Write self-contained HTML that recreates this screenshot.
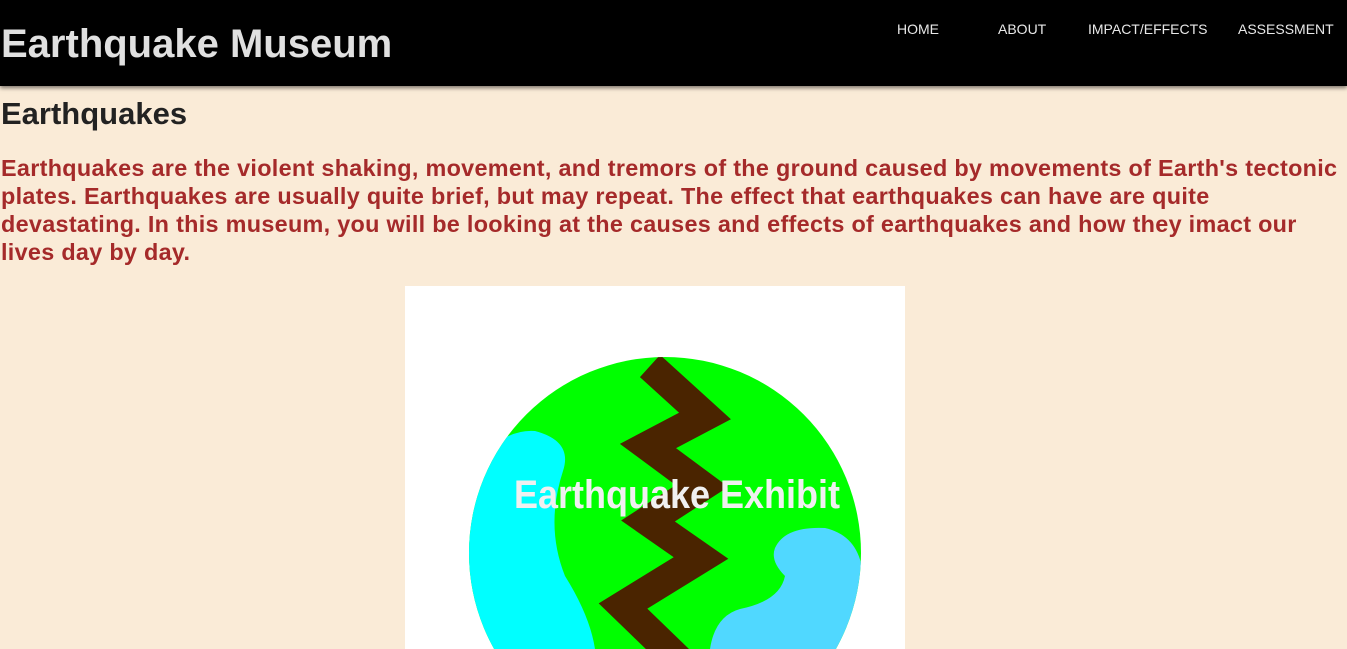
<!DOCTYPE html>
<html><head><style>
body{margin:0;background:#faebd7;font-family:"Liberation Sans",Arial,sans-serif;overflow:hidden;width:1347px;height:649px}
header{background:#000;height:86px;position:relative;box-shadow:0 2px 4px rgba(0,0,0,.5)}
h1{margin:0;position:absolute;left:1px;top:22px;font-size:40px;color:#e0e0e0;font-weight:bold}
nav a{position:absolute;top:21px;color:#e8e8e8;font-size:14px;text-decoration:none}
h2{margin:0;position:absolute;left:1px;top:96px;font-size:31px;color:#222}
p{margin:0;position:absolute;left:1px;top:154px;width:1345px;font-size:23.4px;line-height:28px;color:#a52a2a;font-weight:bold;letter-spacing:0.3px}
svg{position:absolute;left:405px;top:286px}
</style></head><body>
<header><h1>Earthquake Museum</h1>
<nav><a style="left:897px">HOME</a><a style="left:998px">ABOUT</a><a style="left:1088px">IMPACT/EFFECTS</a><a style="left:1238px">ASSESSMENT</a></nav></header>
<h2>Earthquakes</h2>
<p>Earthquakes are the violent shaking, movement, and tremors of the ground caused by movements of Earth's tectonic plates. Earthquakes are usually quite brief, but may repeat. The effect that earthquakes can have are quite devastating. In this museum, you will be looking at the causes and effects of earthquakes and how they imact our lives day by day.</p>
<svg width="500" height="363" viewBox="0 0 500 363">
<rect width="500" height="363" fill="#fff"/>
<defs><clipPath id="c"><circle cx="260" cy="267" r="196"/></clipPath></defs>
<circle cx="260" cy="267" r="196" fill="#00ff00"/>
<g clip-path="url(#c)">
<path d="M55 200 Q90 142 130 145 Q168 155 158 185 Q140 240 160 290 Q185 330 190 363 L40 363Z" fill="#00ffff"/>
<path d="M370 262 Q380 240 420 242 Q455 250 458 290 L458 363 L305 363 Q310 330 335 323 Q375 315 380 290 Q365 275 370 262Z" fill="#50d8ff"/>
<polyline points="245,80 300,130 243,160 297,200 243,235 296,272 218,320 280,380" fill="none" stroke="#4a2400" stroke-width="30" stroke-linejoin="miter" stroke-miterlimit="10"/>
</g>
<text x="272" y="222" text-anchor="middle" font-family="Liberation Sans,sans-serif" font-weight="bold" font-size="40" fill="#f0f0f0" textLength="326" lengthAdjust="spacingAndGlyphs">Earthquake Exhibit</text>
</svg>
</body></html>
